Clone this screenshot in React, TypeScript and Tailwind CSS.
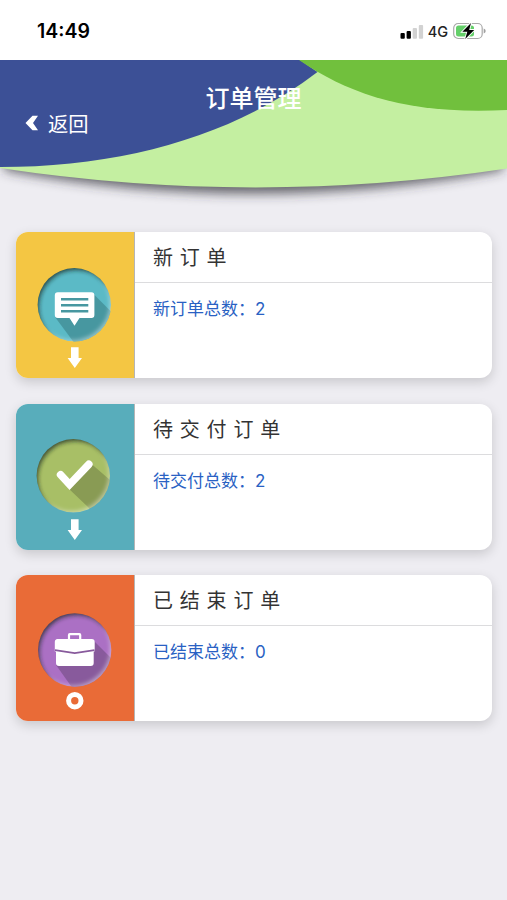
import type { ReactNode } from "react";

type Order = {
  id: string;
  title: string;
  label: string;
  count: number;
  panel: string;
  icon: ReactNode;
};

type BadgeProps = {
  id: string;
  cx: number;
  cy: number;
  fill: string;
  shade: string;
  shadow: string;
  children: ReactNode;
};

// Round recessed badge with a long shadow behind the glyph
function Badge({ id, cx, cy, fill, shade, shadow, children }: BadgeProps) {
  return (
    <svg width="118" height="146" viewBox="0 0 118 146" className="block">
      <defs>
        <clipPath id={`clip-${id}`}>
          <circle cx={cx} cy={cy} r="36.7" />
        </clipPath>
        <filter id={`blur-${id}`} x="-20%" y="-20%" width="140%" height="140%">
          <feGaussianBlur stdDeviation="2" />
        </filter>
      </defs>
      <g clipPath={`url(#clip-${id})`}>
        <circle cx={cx} cy={cy} r="36.7" fill={fill} />
        <path d={shadow} fill={shade} />
        <g filter={`url(#blur-${id})`} fill="none" strokeWidth="8">
          <circle cx={cx - 2} cy={cy - 2} r="41.5" stroke="#fff" strokeOpacity="0.45" />
          <circle cx={cx + 2} cy={cy + 2.6} r="41.5" stroke="#1c2a20" strokeOpacity="0.75" />
        </g>
      </g>
      {children}
    </svg>
  );
}

function DownArrow() {
  return <path d="M55 115.3h7.6v10.8h3.4l-7.2 9.8-7.2-9.8h3.4z" fill="#fff" />;
}

const orders: Order[] = [
  {
    id: "new",
    title: "新订单",
    label: "新订单总数：",
    count: 2,
    panel: "bg-[#f4c643]",
    icon: (
      <Badge id="new" cx={58.3} cy={72.8} fill="#5bbac6" shade="#4797a0" shadow="M77.5 62L110 94.5 90 125 62 116 39 85z">
        <path
          d="M41.8 60.3h33.6a3 3 0 0 1 3 3v19.8a3 3 0 0 1-3 3H63.5l-5 7.6-5-7.6H41.8a3 3 0 0 1-3-3V63.3a3 3 0 0 1 3-3z"
          fill="#fff"
        />
        <path d="M45 67.3h27.3M45 73.3h27.3M45 79.2h27.3" stroke="#4797a0" strokeWidth="2.5" />
        <DownArrow />
      </Badge>
    ),
  },
  {
    id: "pending",
    title: "待交付订单",
    label: "待交付总数：",
    count: 2,
    panel: "bg-[#58adbb]",
    icon: (
      <Badge id="pending" cx={57.3} cy={71.8} fill="#a8bf66" shade="#899b54" shadow="M75.5 60L110 90 84 118 72 103 52 84z">
        <path
          d="M44.6 70.7l9 9.8 19.2-20.2"
          fill="none"
          stroke="#fff"
          strokeWidth="7.6"
          strokeLinecap="round"
        />
        <DownArrow />
      </Badge>
    ),
  },
  {
    id: "finished",
    title: "已结束订单",
    label: "已结束总数：",
    count: 0,
    panel: "bg-[#e96b37]",
    icon: (
      <Badge id="finished" cx={58.7} cy={75} fill="#ab70c4" shade="#885a9c" shadow="M77 65L112 100 86 126 60 118 40 90z">
        <path d="M53 65v-5a.8.8 0 0 1 .8-.8h9.600a.8.8 0 0 1 .8.8v5" fill="none" stroke="#fff" strokeWidth="2.200" />
        <path
          d="M41.500 64h34.200a3 3 0 0 1 3 3v9.200l-1 .6V88a3 3 0 0 1-3 3H43a3 3 0 0 1-3-3V76.800l-1.200-.6V67a3 3 0 0 1 2.700-3z"
          fill="#fff"
        />
        <path d="M39 75.200l19.700 3 19.800-3" fill="none" stroke="#885a9c" strokeWidth="1.800" />
        <circle cx="58.800" cy="125.700" r="6.200" fill="none" stroke="#fff" strokeWidth="5" />
      </Badge>
    ),
  },
];

function StatusBar() {
  return (
    <div className="flex h-[60px] items-center justify-between bg-white pt-[4px] pr-[20px] pl-[37px]">
      <span className="font-['Inter'] text-[19.5px] font-semibold text-black">14:49</span>
      <div className="flex items-center">
        <svg width="24" height="16" viewBox="0 0 24 16">
          <rect x="0.5" y="9" width="4.3" height="5.7" rx="1" fill="#000" />
          <rect x="6.6" y="7" width="4.3" height="7.7" rx="1" fill="#000" />
          <rect x="12.7" y="4" width="4.3" height="10.7" rx="1" fill="#d2d2d2" />
          <rect x="18.8" y="1" width="4.3" height="13.7" rx="1" fill="#d2d2d2" />
        </svg>
        <span className="ml-1 font-['Inter'] text-[14.5px] font-medium text-[#222]">4G</span>
        <svg width="34" height="18" viewBox="0 0 34 18" className="relative -top-px ml-[5px]">
          <rect x="0.7" y="1.5" width="28.5" height="15" rx="4.5" fill="#fff" stroke="#a9a9a9" strokeWidth="1.2" />
          <rect x="3" y="3.6" width="18" height="10.8" rx="2.5" fill="#64cf69" />
          <path d="M30.7 6.5v5q2-.7 2-2.5t-2-2.500z" fill="#a0a0a0" />
          <path
            d="M18 1L9.300 9.800h5L12.200 17l9-9h-5z"
            fill="#000"
            stroke="#fff"
            strokeWidth="1.800"
            paintOrder="stroke"
          />
        </svg>
      </div>
    </div>
  );
}

function Header() {
  return (
    <header className="relative h-[172px] text-white">
      <svg width="507" height="172" viewBox="0 60 507 172" className="absolute inset-0 overflow-hidden">
        <defs>
          <filter id="drop" x="-10%" y="-10%" width="120%" height="140%">
            <feGaussianBlur stdDeviation="6" />
          </filter>
        </defs>
        <path d="M4 60H503V170Q254 217 4 170z" fill="#333038" fillOpacity="0.75" filter="url(#drop)" />
        <path d="M0 60H507V168.500Q254 206.500 0 168z" fill="#c4efa1" />
        <path d="M0 60H300L317.500 72C235 135 125 167 0 167z" fill="#3c5096" />
        <path d="M299 60H507V110C410 115 350 95 299 60z" fill="#71c03d" />
      </svg>
      <h1 className="relative pt-[19px] text-center text-[24px] leading-[36px] font-medium">订单管理</h1>
      <button className="relative mt-[-8px] ml-[25px] flex items-center text-[20.3px] leading-[32px]">
        <svg width="14" height="16" viewBox="0 0 14 16" className="mr-[9px]">
          <path d="M7.500 0.800H13L8 8l5 7.200H7.500L0.500 8z" fill="#fff" />
        </svg>
        返回
      </button>
    </header>
  );
}

function OrderCard({ order }: { order: Order }) {
  return (
    <section className="flex h-[146px] overflow-hidden rounded-[12px] bg-white shadow-[0_4px_12px_rgba(0,0,0,0.16)]">
      <div className={`w-[118px] shrink-0 ${order.panel}`}>{order.icon}</div>
      <div className="flex-1 border-l border-[#b5b5b5]">
        <h2 className="h-[51px] border-b border-[#dcdcde] pl-[18px] text-[20px] leading-[50px] tracking-[6.8px] text-[#333]">
          {order.title}
        </h2>
        <p className="pt-[12px] pl-[18px] text-[17px] leading-[26px] text-[#2961c3]">
          {order.label}
          <span className="font-['Inter']">{order.count}</span>
        </p>
      </div>
    </section>
  );
}

export default function App() {
  return (
    <main className="h-[900px] w-full overflow-hidden bg-[#eeedf2] font-['Noto_Sans_CJK_SC',sans-serif]">
      <StatusBar />
      <Header />
      <div className="flex flex-col gap-[25.7px] pr-[15.5px] pl-[16px]">
        {orders.map((order) => (
          <OrderCard key={order.id} order={order} />
        ))}
      </div>
    </main>
  );
}
